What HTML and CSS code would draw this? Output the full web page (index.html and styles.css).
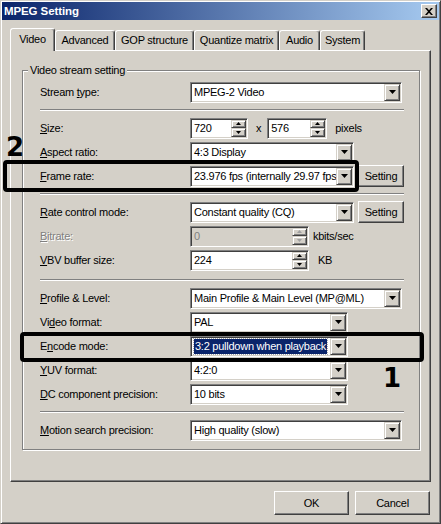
FILE: index.html
```html
<!DOCTYPE html>
<html>
<head>
<meta charset="utf-8">
<title>MPEG Setting</title>
<link rel="stylesheet" href="styles.css">
</head>
<body>
<div class="window">
  <div class="titlebar">
    <span class="title">MPEG Setting</span>
    <span class="close"><svg width="8" height="7" viewBox="0 0 8 7"><path d="M0 0h2l2 2.3L6 0h2L5 3.5 8 7H6L4 4.7 2 7H0l3-3.5z" fill="#000"/></svg></span>
  </div>
  <div class="tabs">
    <div class="tab active t-video">Video</div>
    <div class="tab t-adv">Advanced</div>
    <div class="tab t-gop">GOP structure</div>
    <div class="tab t-quant">Quantize matrix</div>
    <div class="tab t-audio">Audio</div>
    <div class="tab t-system">System</div>
  </div>
  <div class="panel">
    <fieldset class="group">
      <legend>Video stream setting</legend>
      <div class="rows">
        <div class="row">
          <span class="lbl">Stream <u>t</u>ype:</span>
          <div class="combo c-full"><span class="val">MPEG-2 Video</span><span class="drop"><svg width="7" height="4"><path d="M0 0h7L3.5 4z"/></svg></span></div>
        </div>
        <div class="sep"></div>
        <div class="row">
          <span class="lbl"><u>S</u>ize:</span>
          <div class="spin s-size1"><span class="val">720</span><span class="spinbtns"><span class="sb"><svg width="5" height="3"><path d="M2.5 0L5 3H0z"/></svg></span><span class="sb"><svg width="5" height="3"><path d="M0 0h5L2.5 3z"/></svg></span></span></div>
          <span class="times">x</span>
          <div class="spin s-size2"><span class="val">576</span><span class="spinbtns"><span class="sb"><svg width="5" height="3"><path d="M2.5 0L5 3H0z"/></svg></span><span class="sb"><svg width="5" height="3"><path d="M0 0h5L2.5 3z"/></svg></span></span></div>
          <span class="unit u-pixels">pixels</span>
        </div>
        <div class="row">
          <span class="lbl"><u>A</u>spect ratio:</span>
          <div class="combo c-mid"><span class="val">4:3 Display</span><span class="drop"><svg width="7" height="4"><path d="M0 0h7L3.5 4z"/></svg></span></div>
        </div>
        <div class="row">
          <span class="lbl"><u>F</u>rame rate:</span>
          <div class="combo c-mid"><span class="val">23.976 fps (internally 29.97 fps)</span><span class="drop"><svg width="7" height="4"><path d="M0 0h7L3.5 4z"/></svg></span></div>
          <button class="btn btn-small">Setting</button>
        </div>
        <div class="sep"></div>
        <div class="row">
          <span class="lbl"><u>R</u>ate control mode:</span>
          <div class="combo c-mid"><span class="val">Constant quality (CQ)</span><span class="drop"><svg width="7" height="4"><path d="M0 0h7L3.5 4z"/></svg></span></div>
          <button class="btn btn-small">Setting</button>
        </div>
        <div class="row">
          <span class="lbl disabled"><u>B</u>itrate:</span>
          <div class="spin s-rate disabled-field"><span class="val">0</span><span class="spinbtns off"><span class="sb"><svg width="5" height="3"><path d="M2.5 0L5 3H0z"/></svg></span><span class="sb"><svg width="5" height="3"><path d="M0 0h5L2.5 3z"/></svg></span></span></div>
          <span class="unit u-kbits">kbits/sec</span>
        </div>
        <div class="row">
          <span class="lbl"><u>V</u>BV buffer size:</span>
          <div class="spin s-rate"><span class="val">224</span><span class="spinbtns"><span class="sb"><svg width="5" height="3"><path d="M2.5 0L5 3H0z"/></svg></span><span class="sb"><svg width="5" height="3"><path d="M0 0h5L2.5 3z"/></svg></span></span></div>
          <span class="unit u-kb">KB</span>
        </div>
        <div class="sep sep-wide"></div>
        <div class="row">
          <span class="lbl"><u>P</u>rofile &amp; Level:</span>
          <div class="combo c-full"><span class="val">Main Profile &amp; Main Level (MP@ML)</span><span class="drop"><svg width="7" height="4"><path d="M0 0h7L3.5 4z"/></svg></span></div>
        </div>
        <div class="row">
          <span class="lbl">Vi<u>d</u>eo format:</span>
          <div class="combo c-short"><span class="val">PAL</span><span class="drop"><svg width="7" height="4"><path d="M0 0h7L3.5 4z"/></svg></span></div>
        </div>
        <div class="row">
          <span class="lbl">E<u>n</u>code mode:</span>
          <div class="combo c-short"><span class="val"><span class="sel">3:2 pulldown when playback</span></span><span class="drop"><svg width="7" height="4"><path d="M0 0h7L3.5 4z"/></svg></span></div>
        </div>
        <div class="row">
          <span class="lbl"><u>Y</u>UV format:</span>
          <div class="combo c-short"><span class="val">4:2:0</span><span class="drop"><svg width="7" height="4"><path d="M0 0h7L3.5 4z"/></svg></span></div>
        </div>
        <div class="row">
          <span class="lbl"><u>D</u>C component precision:</span>
          <div class="combo c-short"><span class="val">10 bits</span><span class="drop"><svg width="7" height="4"><path d="M0 0h7L3.5 4z"/></svg></span></div>
        </div>
        <div class="sep"></div>
        <div class="row">
          <span class="lbl"><u>M</u>otion search precision:</span>
          <div class="combo c-full"><span class="val">High quality (slow)</span><span class="drop"><svg width="7" height="4"><path d="M0 0h7L3.5 4z"/></svg></span></div>
        </div>
      </div>
    </fieldset>
  </div>
  <div class="buttons">
    <button class="btn btn-dlg">OK</button>
    <button class="btn btn-dlg">Cancel</button>
  </div>

  <div class="annot annot-2"></div>
  <span class="num num-2">2</span>
  <div class="annot annot-1"></div>
  <span class="num num-1">1</span>
</div>
</body>
</html>
```
FILE: styles.css
```css
* { box-sizing: border-box; }
html, body { margin: 0; padding: 0; background: #d4d0c8; }
body {
  font-family: "Liberation Sans", Arial, sans-serif;
  font-size: 11px;
  letter-spacing: -0.25px;
  color: #000;
}
.window {
  position: relative;
  width: 441px;
  height: 524px;
  background: #d4d0c8;
  border: 1px solid;
  border-color: #d4d0c8 #404040 #404040 #d4d0c8;
  box-shadow: inset 1px 1px 0 #fff, inset -1px -1px 0 #808080;
  padding: 1px;
  display: flex;
  flex-direction: column;
}
.titlebar {
  height: 18px;
  flex: none;
  background: linear-gradient(to right, #0a246a, #a6caf0);
  display: flex;
  align-items: center;
  justify-content: space-between;
  padding: 0 2px 0 2px;
}
.title {
  color: #fff;
  font-weight: bold;
  font-size: 11.5px;
  letter-spacing: -0.1px;
}
.close {
  width: 16px;
  height: 14px;
  background: #d4d0c8;
  border: 1px solid;
  border-color: #fff #404040 #404040 #fff;
  box-shadow: inset -1px -1px 0 #808080;
  display: flex;
  align-items: center;
  justify-content: center;
}
.tabs {
  display: flex;
  align-items: flex-end;
  height: 22px;
  margin: 8px 0 0 8px;
  position: relative;
  z-index: 1;
  flex: none;
}
.tab {
  height: 20px;
  display: flex;
  align-items: center;
  justify-content: center;
  border: 1px solid;
  border-bottom: none;
  border-color: #fff #404040 transparent #fff;
  border-radius: 3px 3px 0 0;
  box-shadow: inset -1px 0 0 #808080;
  background: #d4d0c8;
  padding-bottom: 1px;
}
.tab.active {
  height: 23px;
  margin-bottom: -1px;
  padding-bottom: 2px;
}
.t-video { width: 45px; }
.t-adv { width: 60px; }
.t-gop { width: 79px; }
.t-quant { width: 85px; }
.t-audio { width: 41px; }
.t-system { width: 45px; }

.panel {
  flex: none;
  margin-left: 8px;
  width: 421px;
  height: 432px;
  border: 1px solid;
  border-color: #fff #404040 #404040 #fff;
  box-shadow: inset -1px -1px 0 #808080;
  padding: 13px 11px 0 11px;
}
.group {
  margin: 0;
  padding: 0;
  border: 1px solid #808080;
  box-shadow: inset 1px 1px 0 #fff, 1px 1px 0 #fff;
}
.group legend {
  margin-left: 5px;
  padding: 0 2px;
  line-height: 13px;
  background: #d4d0c8;
}
.rows {
  padding: 3px 15px 7px 17px;
}
.row {
  display: flex;
  align-items: center;
  height: 24px;
}
.lbl {
  width: 150px;
  flex: none;
  white-space: nowrap;
}
.lbl.disabled {
  color: #808080;
  text-shadow: 1px 1px 0 #fff;
}
.sep {
  height: 12px;
  position: relative;
}
.sep::after {
  content: "";
  position: absolute;
  left: 0;
  right: 0;
  top: 5px;
  border-top: 1px solid #808080;
  border-bottom: 1px solid #fff;
}
.sep-wide { height: 14px; }
.sep-wide::after { top: 7px; }

.combo, .spin {
  height: 21px;
  flex: none;
  display: flex;
  align-items: center;
  background: #fff;
  border: 1px solid;
  border-color: #808080 #fff #fff #808080;
  box-shadow: inset 1px 1px 0 #404040, inset -1px -1px 0 #d4d0c8;
  padding: 1px;
}
.c-full { width: 212px; }
.c-mid { width: 164px; }
.c-short { width: 158px; }
.val {
  flex: 1;
  min-width: 0;
  overflow: hidden;
  white-space: nowrap;
  padding-left: 2px;
  line-height: 17px;
  height: 17px;
}
.sel {
  display: inline-block;
  background: #0a246a;
  color: #fff;
  line-height: 15px;
  margin-top: 1px;
  padding: 0 1px;
  outline: 1px dotted #a6a6a6;
}
.drop {
  width: 16px;
  height: 17px;
  flex: none;
  background: #d4d0c8;
  border: 1px solid;
  border-color: #d4d0c8 #404040 #404040 #d4d0c8;
  box-shadow: inset 1px 1px 0 #fff, inset -1px -1px 0 #808080;
  display: flex;
  align-items: center;
  justify-content: center;
}
.drop svg { display: block; }

.s-size1 { width: 58px; }
.s-size2 { width: 60px; }
.s-rate { width: 119px; }
.spinbtns {
  width: 15px;
  height: 17px;
  flex: none;
  display: flex;
  flex-direction: column;
}
.sb {
  flex: 1;
  background: #d4d0c8;
  border: 1px solid;
  border-color: #d4d0c8 #404040 #404040 #d4d0c8;
  box-shadow: inset 1px 1px 0 #fff, inset -1px -1px 0 #808080;
  display: flex;
  align-items: center;
  justify-content: center;
}
.sb svg { display: block; }
.spinbtns.off svg path { fill: #a0a0a0; }
.disabled-field { background: #d4d0c8; }
.disabled-field .val { color: #808080; }

.times { margin: 0 6px 0 8px; }
.unit { white-space: nowrap; }
.u-pixels { margin-left: 8px; }
.u-kbits { margin-left: 4px; }
.u-kb { margin-left: 9px; }

.btn {
  font-family: inherit;
  font-size: 11px;
  letter-spacing: -0.25px;
  color: #000;
  background: #d4d0c8;
  border: 1px solid;
  border-color: #fff #404040 #404040 #fff;
  box-shadow: inset -1px -1px 0 #808080;
  padding: 0;
  margin: 0;
  border-radius: 0;
}
.btn-small {
  width: 46px;
  height: 22px;
  margin-left: 4px;
}
.buttons {
  display: flex;
  justify-content: flex-end;
  gap: 6px;
  padding: 9px 9px 0 0;
}
.btn-dlg {
  width: 75px;
  height: 24px;
}

.annot {
  position: absolute;
  border: 4px solid #000;
  border-radius: 4px;
}
.annot-2 { left: 2px; top: 159px; width: 356px; height: 32px; }
.annot-1 { left: 19px; top: 331px; width: 404px; height: 30px; }
.num {
  position: absolute;
  font-family: "DejaVu Sans", sans-serif;
  font-weight: bold;
  font-size: 26px;
  line-height: 26px;
  letter-spacing: 0;
}
.num-2 { left: 5px; top: 133px; }
.num-1 { left: 382px; top: 364px; }
```
